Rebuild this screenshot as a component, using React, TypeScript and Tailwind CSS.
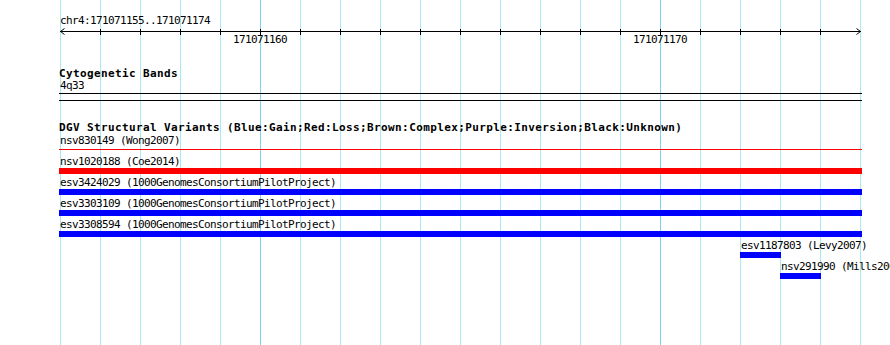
import React from "react";

/* ---------------- data ---------------- */

const gridXs = Array.from({ length: 21 }, (_, i) => 60 + i * 40);
const majorXs = [260, 660];

type Feature = {
  name: string;
  color: "red" | "blue";
  offset: number; // px from left edge of the track
  width: number;
};

const features: Feature[] = [
  { name: "nsv1020188 (Coe2014)", color: "red", offset: 59, width: 803 },
  { name: "esv3424029 (1000GenomesConsortiumPilotProject)", color: "blue", offset: 59, width: 803 },
  { name: "esv3303109 (1000GenomesConsortiumPilotProject)", color: "blue", offset: 59, width: 803 },
  { name: "esv3308594 (1000GenomesConsortiumPilotProject)", color: "blue", offset: 59, width: 803 },
  { name: "esv1187803 (Levy2007)", color: "blue", offset: 740, width: 41 },
  { name: "nsv291990 (Mills2006)", color: "blue", offset: 780, width: 41 },
];

const mono = "font-['DejaVu_Sans_Mono','Liberation_Mono',monospace]";

/* ---------------- pieces ---------------- */

function Ruler() {
  return (
    <div className="relative h-[20px]">
      <svg
        width={890}
        height={20}
        className="absolute left-0 top-0"
        shapeRendering="crispEdges"
      >
        <line x1={60} y1={4.5} x2={861} y2={4.5} stroke="#000" strokeWidth={1} />
        {gridXs.slice(1, -1).map(x => (
          <line key={x} x1={x + 0.5} y1={2} x2={x + 0.5} y2={8} stroke="#000" strokeWidth={1} />
        ))}
        <path d="M64.5 1.5 L60.5 4.5 L64.5 7.5" fill="none" stroke="#000" strokeWidth={1} shapeRendering="auto" />
        <path d="M856.5 1.5 L860.5 4.5 L856.5 7.5" fill="none" stroke="#000" strokeWidth={1} shapeRendering="auto" />
      </svg>
      <span className="absolute left-[233px] top-[7px] leading-[12px]">171071160</span>
      <span className="absolute left-[633px] top-[7px] leading-[12px]">171071170</span>
    </div>
  );
}

function FeatureRow({ f, first }: { f: Feature; first?: boolean }) {
  return (
    <div className={first ? "mt-[6px]" : "mt-[3px]"} style={{ marginLeft: f.offset }}>
      <div className="leading-[12px] whitespace-nowrap pl-[1px]">{f.name}</div>
      <div
        className={`h-[6px] ${f.color === "red" ? "bg-[#ff0000]" : "bg-[#0000ff]"}`}
        style={{ width: f.width }}
      />
    </div>
  );
}

/* ---------------- page ---------------- */

export default function App() {
  return (
    <div
      className={`relative w-[890px] h-[345px] overflow-hidden bg-white text-black text-[11px] tracking-[-0.62px] ${mono}`}
    >
      {/* grid */}
      {gridXs.map(x => (
        <div
          key={x}
          className={`absolute top-0 bottom-0 w-px ${
            majorXs.includes(x) ? "bg-[#80d0f0]" : "bg-[#a8e8f2]"
          }`}
          style={{ left: x }}
        />
      ))}

      <div className="relative pt-[15px]">
        <div className="pl-[60px] leading-[12px]">chr4:171071155..171071174</div>
        <Ruler />

        {/* Cytogenetic bands */}
        <div className="mt-[21px] pl-[59px] font-bold tracking-[0.38px] leading-[12px]">
          Cytogenetic Bands
        </div>
        <div className="pl-[60px] leading-[12px]">4q33</div>
        <div className="ml-[59px] mt-[1px] w-[803px] h-px bg-black" />
        <div className="ml-[59px] mt-[6px] w-[803px] h-px bg-black" />

        {/* DGV */}
        <div className="mt-[21px] pl-[59px] font-bold tracking-[0.38px] leading-[12px] whitespace-nowrap">
          DGV Structural Variants (Blue:Gain;Red:Loss;Brown:Complex;Purple:Inversion;Black:Unknown)
        </div>
        <div className="mt-[1px] pl-[60px] leading-[12px]">nsv830149 (Wong2007)</div>
        <div className="ml-[59px] mt-[2px] w-[803px] h-px bg-[#ff0000]" />
        {features.map((f, i) => (
          <FeatureRow key={f.name} f={f} first={i === 0} />
        ))}
      </div>
    </div>
  );
}
